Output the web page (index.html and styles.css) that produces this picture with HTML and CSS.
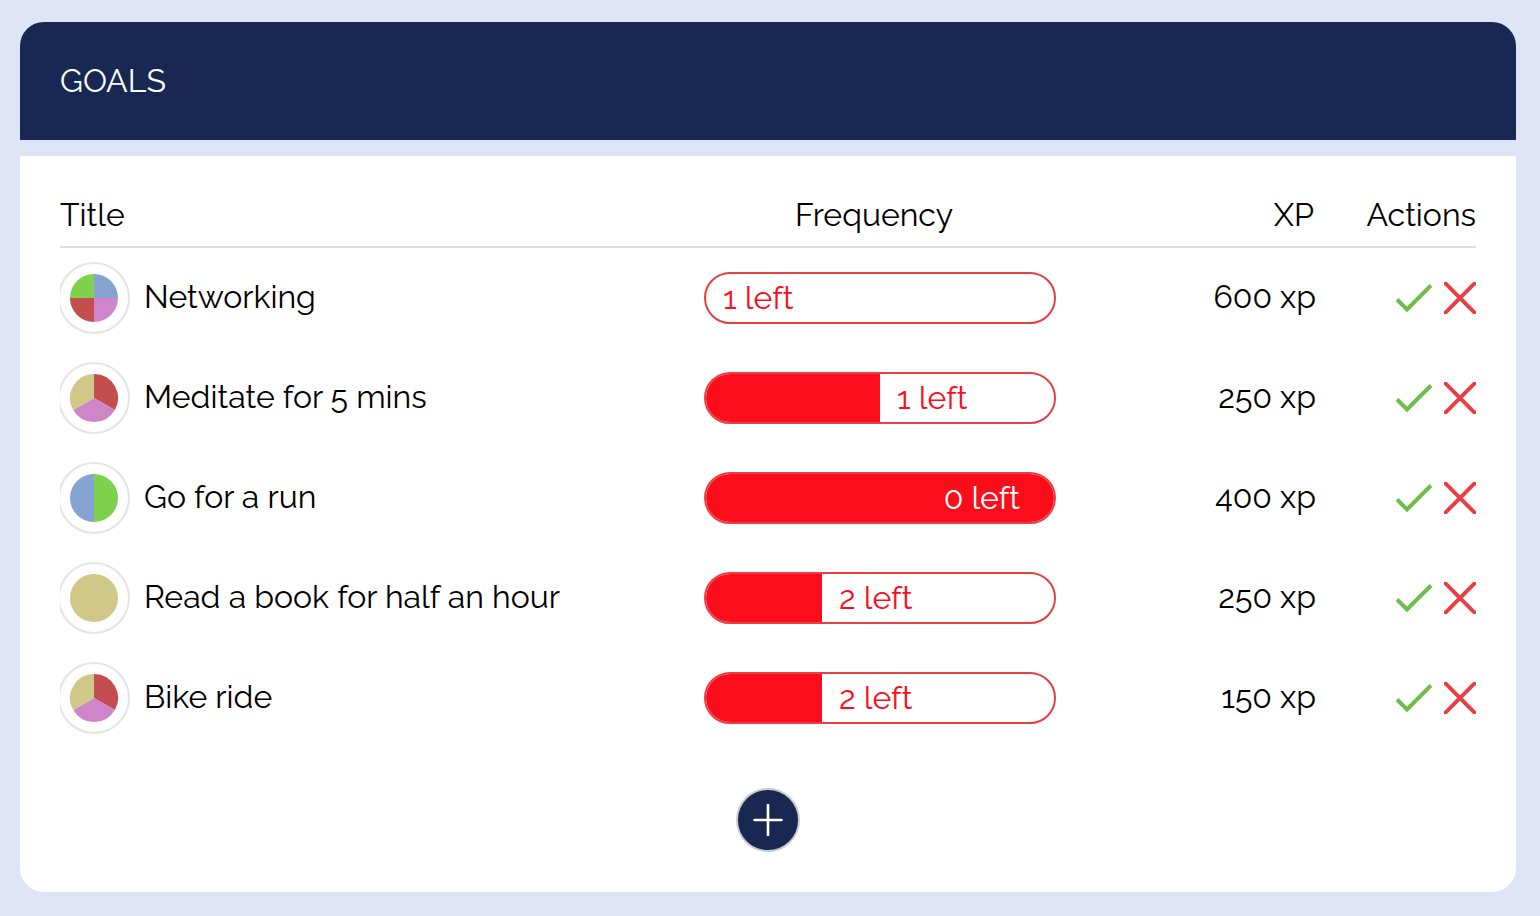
FILE: index.html
```html
<!DOCTYPE html>
<html lang="en">
<head>
<meta charset="utf-8">
<meta name="viewport" content="width=device-width, initial-scale=1">
<title>Goals</title>
<link rel="stylesheet" href="styles.css">
</head>
<body>
<svg class="sprite" aria-hidden="true">
  <symbol id="check" viewBox="0 0 36 28"><path d="M1 15.500 11 25.500 35 1.500" fill="none" stroke="#6abf4b" stroke-width="4"/></symbol>
  <symbol id="cross" viewBox="0 0 32 32"><path d="M0 0 32 32M32 0 0 32" fill="none" stroke="#e64042" stroke-width="4"/></symbol>
  <symbol id="thirds" viewBox="-34 -36 70 72">
    <circle r="35" fill="#fff" stroke="#e5e5e5" stroke-width="2"/>
    <path d="M0 0V-24A24 24 0 0 1 20.8 12Z" fill="#c44d4f"/>
    <path d="M0 0 20.8 12A24 24 0 0 1-20.8 12Z" fill="#cf86c8"/>
    <path d="M0 0-20.8 12A24 24 0 0 1 0-24Z" fill="#d0c888"/>
  </symbol>
</svg>
<main class="page">
  <header class="banner"><h1 class="banner-title">GOALS</h1></header>
  <section class="card">
    <table class="goals">
      <thead>
        <tr>
          <th scope="col">Title</th>
          <th scope="col" class="col-frequency">Frequency</th>
          <th scope="col" class="col-xp">XP</th>
          <th scope="col" class="col-actions">Actions</th>
        </tr>
      </thead>
      <tbody>
        <tr>
          <td><div class="goal">
            <svg class="pie" viewBox="-34 -36 70 72" aria-hidden="true">
              <circle r="35" fill="#fff" stroke="#e5e5e5" stroke-width="2"/>
              <path d="M0 0V-24A24 24 0 0 1 24 0Z" fill="#87a3cf"/>
              <path d="M0 0H24A24 24 0 0 1 0 24Z" fill="#cf86c8"/>
              <path d="M0 0V24A24 24 0 0 1-24 0Z" fill="#c44d4f"/>
              <path d="M0 0H-24A24 24 0 0 1 0-24Z" fill="#7fd14e"/>
            </svg>
            <span class="name">Networking</span></div></td>
          <td><div class="meter"><div class="fill" style="width:0%"></div><span class="left">1 left</span></div></td>
          <td class="xp">600 xp</td>
          <td><div class="actions"><button class="action" aria-label="Complete"><svg class="check"><use href="#check"/></svg></button><button class="action" aria-label="Delete"><svg class="cross"><use href="#cross"/></svg></button></div></td>
        </tr>
        <tr>
          <td><div class="goal"><svg class="pie" aria-hidden="true"><use href="#thirds"/></svg><span class="name">Meditate for 5 mins</span></div></td>
          <td><div class="meter"><div class="fill" style="width:50%"></div><span class="left">1 left</span></div></td>
          <td class="xp">250 xp</td>
          <td><div class="actions"><button class="action" aria-label="Complete"><svg class="check"><use href="#check"/></svg></button><button class="action" aria-label="Delete"><svg class="cross"><use href="#cross"/></svg></button></div></td>
        </tr>
        <tr>
          <td><div class="goal">
            <svg class="pie" viewBox="-34 -36 70 72" aria-hidden="true">
              <circle r="35" fill="#fff" stroke="#e5e5e5" stroke-width="2"/>
              <path d="M0-24A24 24 0 0 1 0 24Z" fill="#7fd14e"/>
              <path d="M0 24A24 24 0 0 1 0-24Z" fill="#87a3cf"/>
            </svg>
            <span class="name">Go for a run</span></div></td>
          <td><div class="meter"><div class="fill full" style="width:100%"><span>0 left</span></div></div></td>
          <td class="xp">400 xp</td>
          <td><div class="actions"><button class="action" aria-label="Complete"><svg class="check"><use href="#check"/></svg></button><button class="action" aria-label="Delete"><svg class="cross"><use href="#cross"/></svg></button></div></td>
        </tr>
        <tr>
          <td><div class="goal">
            <svg class="pie" viewBox="-34 -36 70 72" aria-hidden="true">
              <circle r="35" fill="#fff" stroke="#e5e5e5" stroke-width="2"/>
              <circle r="24" fill="#d0c888"/>
            </svg>
            <span class="name">Read a book for half an hour</span></div></td>
          <td><div class="meter"><div class="fill" style="width:33.33%"></div><span class="left">2 left</span></div></td>
          <td class="xp">250 xp</td>
          <td><div class="actions"><button class="action" aria-label="Complete"><svg class="check"><use href="#check"/></svg></button><button class="action" aria-label="Delete"><svg class="cross"><use href="#cross"/></svg></button></div></td>
        </tr>
        <tr>
          <td><div class="goal"><svg class="pie" aria-hidden="true"><use href="#thirds"/></svg><span class="name">Bike ride</span></div></td>
          <td><div class="meter"><div class="fill" style="width:33.33%"></div><span class="left">2 left</span></div></td>
          <td class="xp">150 xp</td>
          <td><div class="actions"><button class="action" aria-label="Complete"><svg class="check"><use href="#check"/></svg></button><button class="action" aria-label="Delete"><svg class="cross"><use href="#cross"/></svg></button></div></td>
        </tr>
      </tbody>
    </table>
    <button class="add" aria-label="Add goal">
      <svg class="plus" viewBox="0 0 32 32" aria-hidden="true"><path d="M16 1V31M2.500 16H29.500" fill="none" stroke="#fff" stroke-width="2.600" stroke-linecap="round"/></svg>
    </button>
  </section>
</main>
</body>
</html>
```
FILE: styles.css
```css
* {
  box-sizing: border-box;
}

body {
  margin: 0;
  background: #dfe5f7;
  color: #000;
  font-family: Raleway, Lato, sans-serif;
  font-size: 32px;
  line-height: 38px;
}

.sprite {
  display: none;
}

.page {
  display: flex;
  flex-direction: column;
  gap: 16px;
  padding: 22px 24px 24px 20px;
}

.banner {
  padding: 40px;
  border-radius: 24px 24px 0 0;
  background: #182852;
  color: #fff;
}

.banner-title {
  margin: 0;
  font-size: 32px;
  font-weight: 400;
}

.card {
  display: flex;
  flex-direction: column;
  align-items: center;
  gap: 40px;
  padding: 40px;
  border-radius: 0 0 24px 24px;
  background: #fff;
}

.goals {
  width: 100%;
  table-layout: fixed;
  border-collapse: separate;
  border-spacing: 0;
}

.goals th {
  padding: 0 0 12px;
  border-bottom: 2px solid #ddd;
  font-weight: 400;
  text-align: left;
}

.goals td {
  height: 100px;
  padding: 0;
  vertical-align: middle;
}

.goals .col-frequency {
  width: 352px;
  padding-right: 12px;
  text-align: center;
}

.goals .col-xp {
  width: 260px;
  padding-right: 2px;
  text-align: right;
}

.goals .col-actions {
  width: 160px;
  text-align: right;
}

.goal {
  display: flex;
  align-items: center;
  gap: 14px;
}

.name {
  padding-bottom: 2px;
}

.pie {
  flex: none;
  width: 70px;
  height: 72px;
}

.meter {
  display: flex;
  height: 52px;
  overflow: hidden;
  border: 2px solid #e64042;
  border-radius: 26px;
  color: #fc0d1b;
  line-height: 48px;
}

.fill {
  flex: none;
  background: #fc0d1b;
}

.full {
  padding-right: 34px;
  color: #fff;
  text-align: right;
}

.left {
  padding-left: 17px;
}

.goals .xp {
  padding-bottom: 2px;
  text-align: right;
}

.actions {
  display: flex;
  align-items: center;
  justify-content: flex-end;
  gap: 12px;
}

.action {
  display: flex;
  padding: 0;
  border: 0;
  background: none;
  cursor: pointer;
}

.check {
  width: 36px;
  height: 28px;
}

.cross {
  width: 32px;
  height: 32px;
}

.add {
  display: flex;
  align-items: center;
  justify-content: center;
  width: 64px;
  height: 64px;
  padding: 0;
  border: 2px solid #ccc;
  border-radius: 50%;
  background: #182852;
  cursor: pointer;
}

.plus {
  width: 32px;
  height: 32px;
}
```
